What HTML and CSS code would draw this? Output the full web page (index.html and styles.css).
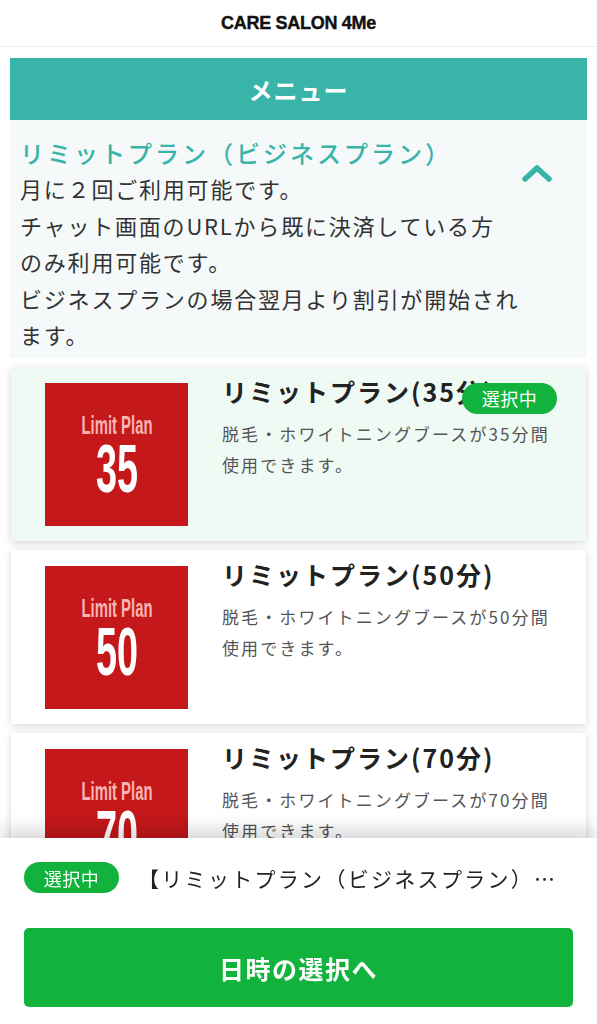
FILE: index.html
```html
<!DOCTYPE html>
<html lang="ja">
<head>
<meta charset="UTF-8">
<title>CARE SALON 4Me</title>
<link rel="stylesheet" href="styles.css">
</head>
<body>
<header class="site-header">
    <h1>CARE SALON 4Me</h1>
</header>

<main class="page">
    <h2 class="menu-head">メニュー</h2>

    <section class="category">
        <div class="category-text">
            <h3>リミットプラン（ビジネスプラン）</h3>
            <p>月に２回ご利用可能です。<br>チャット画面のURLから既に決済している方<br>のみ利用可能です。<br>ビジネスプランの場合翌月より割引が開始され<br>ます。</p>
        </div>
        <svg class="chevron" width="32" height="18" viewBox="0 0 32 18">
            <polyline points="4,15 16,4 28,15" fill="none" stroke="#38b4a9" stroke-width="5.5" stroke-linecap="round" stroke-linejoin="round"/>
        </svg>
    </section>

    <ul class="plans">
        <li class="plan is-selected">
            <svg class="thumb" width="143" height="143" viewBox="0 0 143 143">
                <rect width="143" height="143" fill="#c4181b"/>
                <text x="72" y="51" text-anchor="middle" class="thumb-label" textLength="71" lengthAdjust="spacingAndGlyphs">Limit Plan</text>
                <text x="72" y="109" text-anchor="middle" class="thumb-num" textLength="42" lengthAdjust="spacingAndGlyphs">35</text>
            </svg>
            <div class="plan-body">
                <h4>リミットプラン(35分)</h4>
                <p>脱毛・ホワイトニングブースが35分間使用できます。</p>
            </div>
            <span class="badge plan-badge">選択中</span>
        </li>
        <li class="plan">
            <svg class="thumb" width="143" height="143" viewBox="0 0 143 143">
                <rect width="143" height="143" fill="#c4181b"/>
                <text x="72" y="51" text-anchor="middle" class="thumb-label" textLength="71" lengthAdjust="spacingAndGlyphs">Limit Plan</text>
                <text x="72" y="109" text-anchor="middle" class="thumb-num" textLength="42" lengthAdjust="spacingAndGlyphs">50</text>
            </svg>
            <div class="plan-body">
                <h4>リミットプラン(50分)</h4>
                <p>脱毛・ホワイトニングブースが50分間使用できます。</p>
            </div>
        </li>
        <li class="plan">
            <svg class="thumb" width="143" height="143" viewBox="0 0 143 143">
                <rect width="143" height="143" fill="#c4181b"/>
                <text x="72" y="51" text-anchor="middle" class="thumb-label" textLength="71" lengthAdjust="spacingAndGlyphs">Limit Plan</text>
                <text x="72" y="109" text-anchor="middle" class="thumb-num" textLength="42" lengthAdjust="spacingAndGlyphs">70</text>
            </svg>
            <div class="plan-body">
                <h4>リミットプラン(70分)</h4>
                <p>脱毛・ホワイトニングブースが70分間使用できます。</p>
            </div>
        </li>
    </ul>
</main>

<footer class="action-bar">
    <div class="selection">
        <span class="badge">選択中</span>
        <span class="selection-name">【リミットプラン（ビジネスプラン）リミットプラン(35分)】</span>
    </div>
    <button class="next-btn" type="button">日時の選択へ</button>
</footer>
</body>
</html>
```

FILE: styles.css
```css
html{
    background:#fff;
}
body{
    margin:0;
    font-family:"Noto Sans CJK JP", "Noto Sans", sans-serif;
    color:#333;
}
ul, h1, h2, h3, h4, p{
    margin:0;
    padding:0;
}
.site-header{
    height:46px;
    border-bottom:1px solid #eceeee;
    display:flex;
    align-items:center;
    justify-content:center;
}
.site-header h1{
    font-family:"Liberation Sans", Arial, sans-serif;
    font-weight:700;
    font-size:18px;
    letter-spacing:-0.3px;
    -webkit-text-stroke:0.4px #111;
    color:#111;
    padding-top:1px;
}
.page{
    padding:11px 10px 200px;
}
.menu-head{
    height:62px;
    background:#38b4a9;
    color:#fff;
    font-size:24px;
    font-weight:700;
    letter-spacing:1px;
    display:flex;
    align-items:center;
    justify-content:center;
}
.category{
    background:#f5f9f9;
    padding:16px 10px 5px;
    display:flex;
    align-items:flex-start;
    justify-content:space-between;
}
.category h3{
    color:#38b4a9;
    font-size:24px;
    font-weight:500;
    letter-spacing:3px;
    line-height:34px;
}
.category p{
    font-size:22px;
    letter-spacing:1.8px;
    line-height:36.5px;
    color:#333;
}
.chevron{
    margin:28px 24px 0 0;
}
.plans{
    list-style:none;
    display:flex;
    flex-direction:column;
    gap:9px;
    margin-top:9px;
}
.plan{
    position:relative;
    margin:0 1px;
    padding:16px 34px 15px;
    background:#fff;
    box-shadow:0 2px 8px rgba(0,0,0,0.16);
    display:flex;
    gap:34px;
}
.plan.is-selected{
    background:#f0faf5;
}
.thumb{
    flex:none;
    display:block;
}
.thumb-label{
    font-family:"Liberation Sans Narrow", "Liberation Sans", sans-serif;
    font-weight:700;
    font-size:26px;
    fill:#f7b4b2;
}
.thumb-num{
    font-family:"Liberation Sans Narrow", "Liberation Sans", sans-serif;
    font-weight:700;
    font-size:68px;
    fill:#fff;
}
.plan-body{
    margin-top:-8px;
}
.plan-body h4{
    font-size:25px;
    font-weight:700;
    letter-spacing:2px;
    line-height:32px;
    color:#222;
}
.plan-body p{
    margin-top:11px;
    font-size:17px;
    letter-spacing:2.1px;
    line-height:31px;
    color:#555;
}
.badge{
    display:inline-flex;
    align-items:center;
    justify-content:center;
    width:95px;
    height:31px;
    border-radius:16px;
    background:#11b33d;
    color:#fff;
    font-size:18px;
    letter-spacing:0.5px;
    flex:none;
}
.plan-badge{
    position:absolute;
    top:16px;
    right:29px;
}
.action-bar{
    position:fixed;
    left:0;
    right:0;
    bottom:0;
    height:186px;
    background:#fff;
    box-shadow:0 -8px 18px rgba(0,0,0,0.16);
    padding:24px 24px 0;
    box-sizing:border-box;
}
.selection{
    display:flex;
    align-items:center;
    gap:19px;
    padding-right:10px;
}
.selection-name{
    font-size:21px;
    letter-spacing:2.3px;
    color:#222;
    white-space:nowrap;
    overflow:hidden;
    text-overflow:ellipsis;
}
.next-btn{
    display:block;
    width:100%;
    height:79px;
    margin-top:35px;
    border:0;
    border-radius:5px;
    background:#11b33d;
    color:#fff;
    font-family:"Noto Sans CJK JP", sans-serif;
    font-size:25px;
    font-weight:700;
    letter-spacing:1.5px;
}
```
